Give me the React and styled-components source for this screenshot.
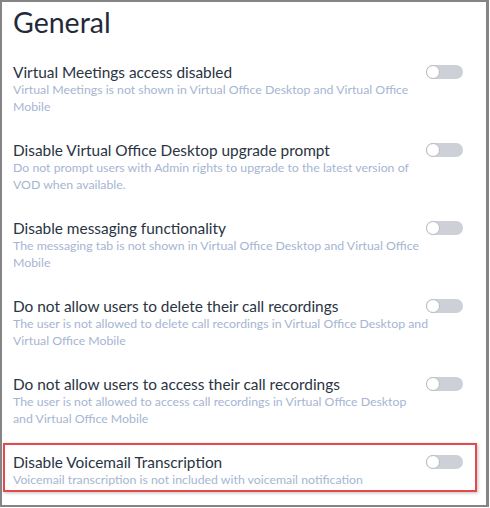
import React from 'react';
import styled, { createGlobalStyle } from 'styled-components'

const GlobalStyle = createGlobalStyle`
body {
  margin:0;
  background:#ffffff;
  font-family: 'Lato', 'Noto Sans', sans-serif;
}
`

const Frame = styled.div`
width:489px;
height:507px;
box-sizing:border-box;
border:2px solid #858585;
border-right-width:3px;
background:#ffffff;
overflow:hidden;
`

const Heading = styled.h1`
margin:0;
padding:4px 0 0 11px;
height:51px;
box-sizing:border-box;
font-size:28.5px;
font-weight:400;
line-height:32px;
color:#1f2b3b;
`

const List = styled.div`
display:flex;
flex-direction:column;
gap:12px;
padding:0 9px 0 1px;
`

const Row = styled.div`
display:flex;
align-items:flex-start;
justify-content:space-between;
height:${props => props.highlight ? '49px' : '66px'};
box-sizing:border-box;
padding:9px 12px 2px 8px;
border:2px solid ${props => props.highlight ? '#e5494c' : 'transparent'};
box-shadow:${props => props.highlight ? '1px 1px 3px rgba(0,0,0,.25)' : 'none'};
`

const Texts = styled.div`
display:flex;
flex-direction:column;
flex:1;
min-width:0;
`

const Title = styled.div`
font-size:15.4px;
line-height:16px;
color:#2a3442;
`

const Desc = styled.div`
width:416px;
margin-top:1px;
font-size:12.3px;
line-height:17px;
color:#a6b5d2;
`

const Toggle = styled.div`
position:relative;
flex:none;
width:37px;
height:14px;
margin-top:1px;
border-radius:7px;
background:#cdd0d7;
`

const Knob = styled.span`
position:absolute;
left:0;
top:0;
width:14px;
height:14px;
box-sizing:border-box;
border-radius:50%;
background:#ffffff;
border:1px solid #b9bdc6;
`

const settings = [
  {
    title: 'Virtual Meetings access disabled',
    desc: 'Virtual Meetings is not shown in Virtual Office Desktop and Virtual Office Mobile',
  },
  {
    title: 'Disable Virtual Office Desktop upgrade prompt',
    desc: 'Do not prompt users with Admin rights to upgrade to the latest version of VOD when available.',
  },
  {
    title: 'Disable messaging functionality',
    desc: 'The messaging tab is not shown in Virtual Office Desktop and Virtual Office Mobile',
  },
  {
    title: 'Do not allow users to delete their call recordings',
    desc: 'The user is not allowed to delete call recordings in Virtual Office Desktop and Virtual Office Mobile',
  },
  {
    title: 'Do not allow users to access their call recordings',
    desc: 'The user is not allowed to access call recordings in Virtual Office Desktop and Virtual Office Mobile',
  },
  {
    title: 'Disable Voicemail Transcription',
    desc: 'Voicemail transcription is not included with voicemail notification',
    highlight: true,
  },
]

const App = () => {
  return (
    <Frame>
      <GlobalStyle />
      <Heading>General</Heading>
      <List>
        {settings.map(s => (
          <Row key={s.title} highlight={s.highlight}>
            <Texts>
              <Title>{s.title}</Title>
              <Desc>{s.desc}</Desc>
            </Texts>
            <Toggle><Knob /></Toggle>
          </Row>
        ))}
      </List>
    </Frame>
  )
}

export default App
